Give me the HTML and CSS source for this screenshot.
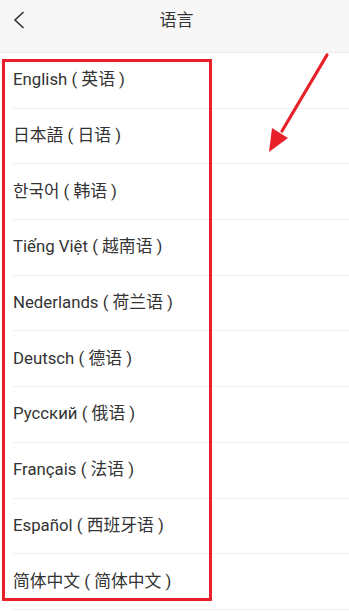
FILE: index.html
```html
<!DOCTYPE html>
<html lang="zh">
<head>
<meta charset="utf-8">
<link rel="stylesheet" href="styles.css">
</head>
<body>
<div class="page">
  <header class="bar">
    <span class="back">
      <svg width="12" height="18" viewBox="0 0 12 18"><path d="M10.5 1 L2 9 L10.5 17" fill="none" stroke="#333" stroke-width="1.6"/></svg>
    </span>
    <h1 class="title">语言</h1>
  </header>
  <ul class="list">
    <li class="item">English ( 英语 )</li>
    <li class="item">日本語 ( 日语 )</li>
    <li class="item">한국어 ( 韩语 )</li>
    <li class="item">Tiếng Việt ( 越南语 )</li>
    <li class="item">Nederlands ( 荷兰语 )</li>
    <li class="item">Deutsch ( 德语 )</li>
    <li class="item">Русский ( 俄语 )</li>
    <li class="item">Français ( 法语 )</li>
    <li class="item">Español ( 西班牙语 )</li>
    <li class="item">简体中文 ( 简体中文 )</li>
  </ul>
  <div class="highlight"></div>
  <svg class="arrow" width="349" height="611" viewBox="0 0 349 611">
    <line x1="327" y1="55" x2="282" y2="131" stroke="#e8202a" stroke-width="3.2" stroke-linecap="round"/>
    <polygon points="269,152 272,128 288,138" fill="#e8202a"/>
  </svg>
</div>
</body>
</html>
```
FILE: styles.css
```css
html, body {
  margin: 0;
  padding: 0;
  background: #ffffff;
}
.page {
  position: relative;
  width: 349px;
  height: 611px;
  overflow: hidden;
  font-family: Roboto, "Noto Sans CJK SC", sans-serif;
  color: #333333;
}
.bar {
  box-sizing: border-box;
  height: 53px;
  padding-top: 8px;
  background: #f7f7f7;
  border-bottom: 1px solid #ececec;
  display: flex;
  align-items: flex-start;
  justify-content: center;
  position: relative;
}
.back {
  position: absolute;
  left: 13px;
  top: 11px;
  display: flex;
}
.title {
  margin: 0;
  font-size: 17px;
  line-height: 24px;
  font-weight: normal;
  color: #333333;
  padding-left: 4px;
}
.list {
  list-style: none;
  margin: 0;
  padding: 0 0 0 13px;
}
.item {
  box-sizing: border-box;
  height: 55.7px;
  display: flex;
  align-items: center;
  padding-bottom: 4px;
  border-bottom: 1px solid #efefef;
  font-size: 16.8px;
  color: #333333;
  white-space: pre;
}
.highlight {
  position: absolute;
  left: 2px;
  top: 59px;
  width: 204px;
  height: 536px;
  border: 3px solid #e8202a;
}
.arrow {
  position: absolute;
  left: 0;
  top: 0;
  pointer-events: none;
}
```
